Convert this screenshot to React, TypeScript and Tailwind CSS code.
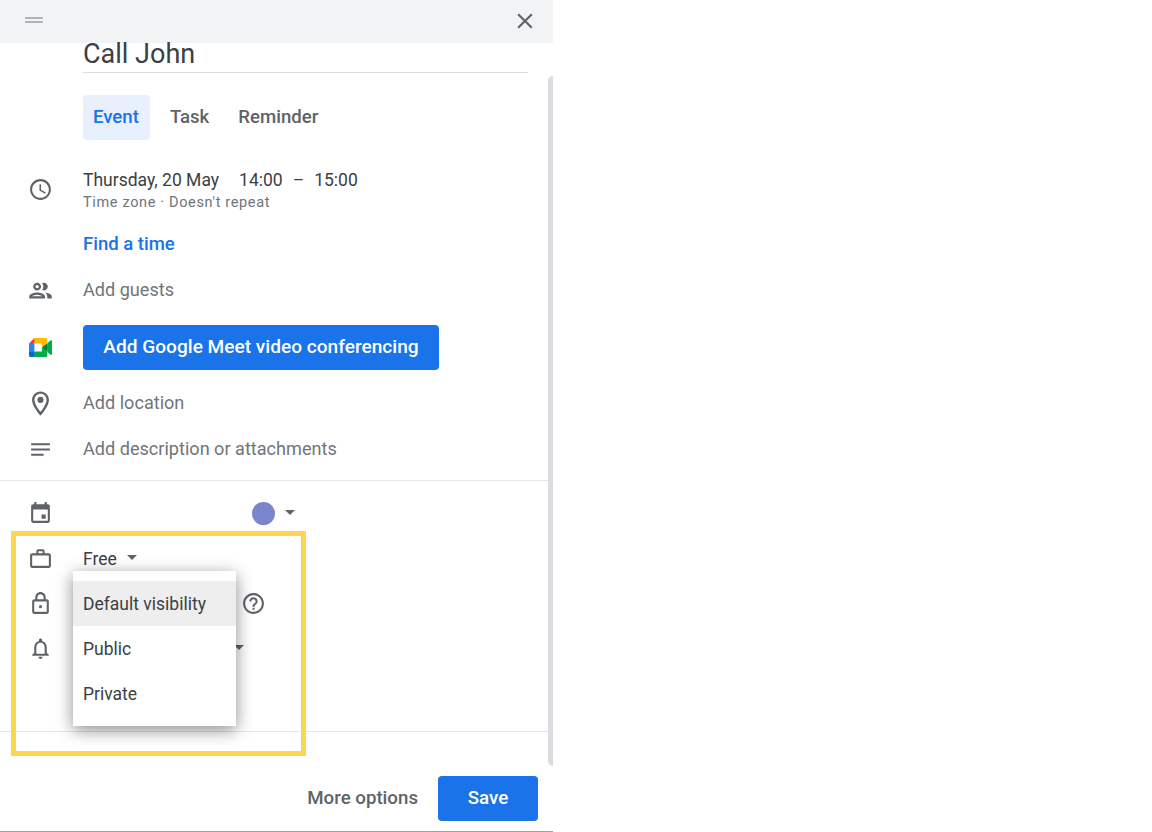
import type { ReactNode } from "react"

const roboto = "font-['Roboto',sans-serif]"

function Icon({ d, className = "w-[25px] h-[25px]" }: { d: string; className?: string }) {
  return (
    <svg viewBox="0 0 24 24" className={`fill-[#5f6368] shrink-0 ${className}`}>
      <path d={d} />
    </svg>
  )
}

function Caret({ className = "" }: { className?: string }) {
  return <span className={`w-0 h-0 border-x-[5px] border-x-transparent border-t-[5px] border-t-[#5f6368] ${className}`} />
}

function MeetLogo() {
  return (
    <svg viewBox="0 0 87.5 72" className="w-[23px] h-[19px]">
      <path fill="#00832d" d="M49.5 36l8.53 9.75 11.47 7.33 2-17.02-2-16.64-11.69 6.44z" />
      <path fill="#0066da" d="M0 51.5V66c0 3.315 2.685 6 6 6h14.5l3-10.96-3-9.54-9.95-3z" />
      <path fill="#e94235" d="M20.5 0L0 20.5l10.55 3 9.95-3 2.95-9.41z" />
      <path fill="#2684fc" d="M20.5 20.5H0v31h20.5z" />
      <path fill="#00ac47" d="M82.6 8.68L69.5 19.42v33.66l13.16 10.79c1.97 1.54 4.85.135 4.85-2.37V11c0-2.535-2.945-3.925-4.91-2.32zM49.5 36v15.5h-29V72h43c3.315 0 6-2.685 6-6V53.08z" />
      <path fill="#ffba00" d="M63.5 0h-43v20.5h29V36l20-16.57V6c0-3.315-2.685-6-6-6z" />
    </svg>
  )
}

// one line of the form: icon column + content
function Row({ icon, className = "", children }: { icon?: ReactNode; className?: string; children: ReactNode }) {
  return (
    <div className={`flex items-center ${className}`}>
      <div className="w-[83px] shrink-0 flex justify-center pr-[3px]">{icon}</div>
      {children}
    </div>
  )
}

const icons = {
  clock: "M11.99 2C6.47 2 2 6.48 2 12s4.47 10 9.99 10C17.52 22 22 17.52 22 12S17.52 2 11.99 2zM12 20c-4.42 0-8-3.58-8-8s3.58-8 8-8 8 3.58 8 8-3.58 8-8 8zm.5-13H11v6l5.25 3.15.75-1.23-4.5-2.67z",
  people: "M9 13.75c-2.34 0-7 1.17-7 3.5V19h14v-1.75c0-2.33-4.66-3.5-7-3.5zM4.34 17c.84-.58 2.87-1.25 4.66-1.25s3.82.67 4.66 1.25H4.34zM9 12c1.93 0 3.5-1.57 3.5-3.5S10.93 5 9 5 5.5 6.57 5.5 8.5 7.07 12 9 12zm0-5c.83 0 1.5.67 1.5 1.5S9.83 10 9 10s-1.5-.67-1.5-1.5S8.17 7 9 7zm7.04 6.81c1.16.84 1.96 1.96 1.96 3.44V19h4v-1.75c0-2.02-3.5-3.17-5.96-3.44zM15 12c1.93 0 3.5-1.57 3.5-3.5S16.93 5 15 5c-.54 0-1.04.13-1.5.35.63.89 1 1.98 1 3.15s-.37 2.26-1 3.15c.46.22.96.35 1.5.35z",
  place: "M12 2C8.13 2 5 5.13 5 9c0 5.25 7 13 7 13s7-7.75 7-13c0-3.87-3.13-7-7-7zM7 9c0-2.76 2.24-5 5-5s5 2.24 5 5c0 2.88-2.88 7.19-5 9.88C9.92 16.21 7 11.85 7 9zm5-2.5a2.5 2.5 0 1 0 0 5 2.5 2.5 0 0 0 0-5z",
  notes: "M3 6h18v2H3zM3 11h18v2H3zM3 16h12v2H3z",
  calendar: "M19 4h-1V2h-2v2H8V2H6v2H5c-1.1 0-2 .9-2 2v14c0 1.1.9 2 2 2h14c1.1 0 2-.9 2-2V6c0-1.1-.9-2-2-2zm0 16H5V9h14v11zM13 14h4v4h-4z",
  work: "M20 7h-4V5c0-1.1-.9-2-2-2h-4c-1.1 0-2 .9-2 2v2H4c-1.1 0-2 .9-2 2v10c0 1.1.9 2 2 2h16c1.1 0 2-.9 2-2V9c0-1.1-.9-2-2-2zM10 5h4v2h-4V5zm10 14H4V9h16v10z",
  lock: "M18 8h-1V6c0-2.76-2.24-5-5-5S7 3.24 7 6v2H6c-1.1 0-2 .9-2 2v10c0 1.1.9 2 2 2h12c1.1 0 2-.9 2-2V10c0-1.1-.9-2-2-2zM9 6c0-1.66 1.34-3 3-3s3 1.34 3 3v2H9V6zm9 14H6V10h12v10zm-6-3.5a1.5 1.5 0 1 0 0-3 1.5 1.5 0 0 0 0 3z",
  bell: "M12 22c1.1 0 2-.9 2-2h-4c0 1.1.9 2 2 2zm6-6v-5c0-3.07-1.63-5.64-4.5-6.32V4c0-.83-.67-1.5-1.5-1.5s-1.5.67-1.5 1.5v.68C7.64 5.36 6 7.92 6 11v5l-2 2v1h16v-1l-2-2zm-2 1H8v-6c0-2.48 1.51-4.5 4-4.5s4 2.02 4 4.5v6z",
  help: "M11 18h2v-2h-2v2zm1-16C6.48 2 2 6.48 2 12s4.48 10 10 10 10-4.48 10-10S17.52 2 12 2zm0 18c-4.41 0-8-3.59-8-8s3.59-8 8-8 8 3.59 8 8-3.59 8-8 8zm0-14c-2.21 0-4 1.79-4 4h2c0-1.1.9-2 2-2s2 .9 2 2c0 2-3 1.75-3 5h2c0-2.25 3-2.5 3-5 0-2.21-1.79-4-4-4z",
  close: "M19 6.41L17.59 5 12 10.59 6.41 5 5 6.41 10.59 12 5 17.59 6.41 19 12 13.41 17.59 19 19 17.59 13.41 12z",
}

export default function App() {
  return (
    <div className={`relative w-[553px] h-[832px] bg-white border-b border-[#9aa0a6] flex flex-col ${roboto}`}>
      {/* Drag bar */}
      <div className="h-[43px] shrink-0 bg-[#f1f3f4] flex items-center justify-between pl-[25px] pr-[15px]">
        <div className="flex flex-col gap-[2px] -mt-[4px]">
          <span className="block w-[18px] h-[2px] bg-[#b0b3b8]" />
          <span className="block w-[18px] h-[2px] bg-[#b0b3b8]" />
        </div>
        <Icon d={icons.close} className="w-[26px] h-[26px] -mt-[1px]" />
      </div>

      <div className="flex-1 flex flex-col">
        {/* Title */}
        <div className="ml-[83px] mr-[25px] h-[30px] border-b border-[#dadce0] text-[27px] leading-[22px] text-[#3c4043]">Call John</div>

        {/* Tabs */}
        <div className="ml-[83px] mt-[22px] flex items-center h-[45px] text-[18.6px] font-medium text-[#5f6368]">
          <span className="h-full pl-[10px] pr-[11px] flex items-center rounded-[4px] bg-[#e8f0fe] text-[#1a73e8]">Event</span>
          <span className="ml-[20px]">Task</span>
          <span className="ml-[29px]">Reminder</span>
        </div>

        {/* Date */}
        <Row icon={<Icon d={icons.clock} className="w-[25px] h-[25px] -mt-[4px]" />} className="mt-[30px] h-[42px]">
          <div>
            <div className="text-[17.5px] leading-[22px] text-[#3c4043] flex">
              <span>Thursday, 20 May</span>
              <span className="ml-[20px]">14:00</span>
              <span className="ml-[10px]">–</span>
              <span className="ml-[10px]">15:00</span>
            </div>
            <div className="mt-[2px] text-[14.5px] leading-[20px] text-[#70757a] tracking-[0.65px]">Time zone · Doesn't repeat</div>
          </div>
        </Row>

        <Row className="mt-[11px] h-[44px]">
          <span className="text-[18.5px] font-medium text-[#1a73e8]">Find a time</span>
        </Row>

        <Row icon={<Icon d={icons.people} className="w-[27px] h-[27px]" />} className="h-[46px]">
          <span className="text-[18.1px] text-[#70757a]">Add guests</span>
        </Row>

        <Row icon={<MeetLogo />} className="mt-[12px] h-[45px]">
          <button className="h-[45px] w-[356px] pb-[1px] rounded-[4px] bg-[#1a73e8] text-white text-[19.1px] font-medium">Add Google Meet video conferencing</button>
        </Row>

        <Row icon={<Icon d={icons.place} className="w-[29px] h-[29px]" />} className="mt-[10px] h-[46px]">
          <span className="text-[18.1px] text-[#70757a]">Add location</span>
        </Row>

        <Row icon={<Icon d={icons.notes} />} className="h-[46px]">
          <span className="text-[18.1px] text-[#70757a]">Add description or attachments</span>
        </Row>

        <div className="mt-[8px] h-px bg-[#e4e6e8] mr-[5px]" />

        {/* Calendar */}
        <Row icon={<Icon d={icons.calendar} className="w-[25px] h-[25px] -mt-[1px]" />} className="mt-[9px] h-[46px]">
          <span className="ml-[169px] w-[23px] h-[23px] rounded-full bg-[#7986cb]" />
          <Caret className="ml-[10px] -mt-[2px]" />
        </Row>

        <Row icon={<Icon d={icons.work} />} className="h-[45px]">
          <span className="mt-[1px] text-[17.5px] text-[#3c4043]">Free</span>
          <Caret className="ml-[10px] -mt-[3px]" />
        </Row>

        <Row icon={<Icon d={icons.lock} />} className="h-[45px]">
          <Icon d={icons.help} className="ml-[158px] w-[25px] h-[25px]" />
        </Row>

        <Row icon={<Icon d={icons.bell} />} className="h-[45px]">
          <Caret className="ml-[151px] -mt-[3px]" />
        </Row>

        <div className="mt-[60px] h-px bg-[#e4e6e8] mr-[5px]" />
      </div>

      {/* Footer */}
      <div className="shrink-0 h-[55px] mb-[5px] flex items-center justify-end gap-[20px] pr-[15px]">
        <span className="text-[18.7px] font-medium text-[#5f6368]">More options</span>
        <button className="w-[100px] h-[45px] rounded-[4px] bg-[#1a73e8] text-white text-[18.7px] font-medium">Save</button>
      </div>

      {/* Scrollbar */}
      <div className="absolute left-[548px] top-[76px] w-[5px] h-[690px] bg-[#dadce0] rounded-tl-[5px] rounded-bl-[5px]" />

      {/* Visibility menu */}
      <div className="absolute left-[73px] top-[571px] w-[163px] py-[10px] bg-white text-[17.5px] text-[#3c4043] shadow-[0_4px_16px_rgba(0,0,0,0.45)]">
        <div className="h-[45px] pl-[10px] pt-[1px] flex items-center bg-[#eeeeee]">Default visibility</div>
        <div className="h-[45px] pl-[10px] pt-[1px] flex items-center">Public</div>
        <div className="h-[45px] pl-[10px] pt-[1px] flex items-center">Private</div>
      </div>

      {/* Highlight box */}
      <div className="absolute left-[11px] top-[531px] w-[295px] h-[225px] border-[5px] border-[#ffd54f] pointer-events-none" />
    </div>
  )
}
